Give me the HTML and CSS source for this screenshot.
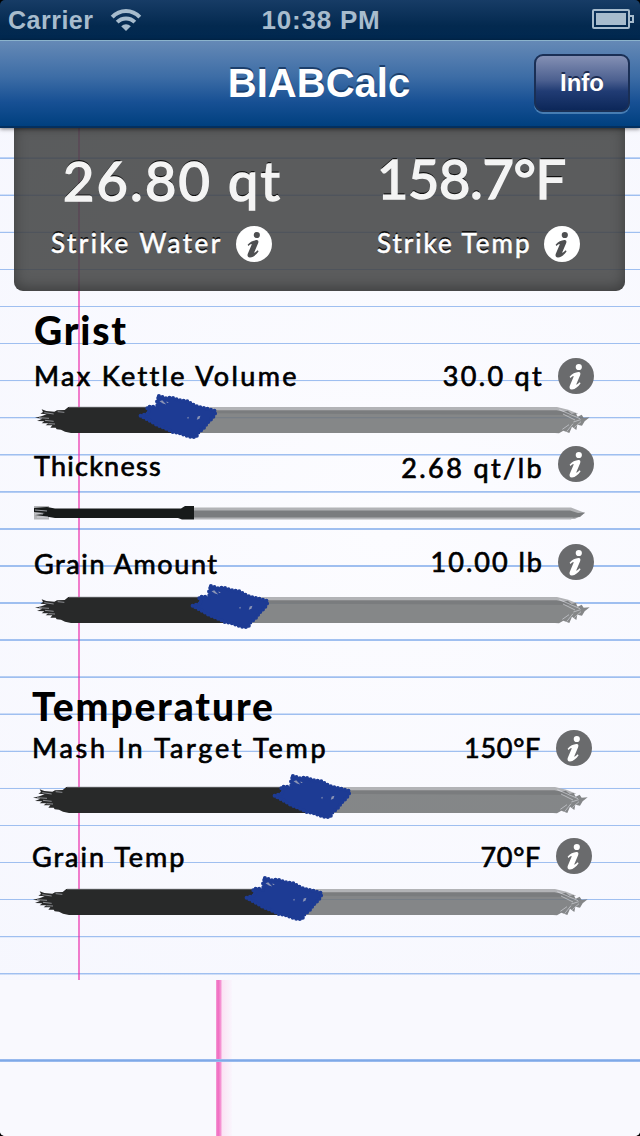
FILE: index.html
```html
<!DOCTYPE html>
<html lang="en">
<head>
    <meta charset="UTF-8">
    <meta name="viewport" content="width=640">
    <title>BIABCalc</title>
    <link rel="stylesheet" href="styles.css">
</head>
<body>
    <!-- shared shapes -->
    <svg class="defs" width="0" height="0" aria-hidden="true">
        <symbol id="info" viewBox="0 0 36 36">
            <circle class="disc" cx="18" cy="18" r="18"/>
            <circle class="mark" cx="20.8" cy="9" r="3.1"/>
            <path class="mark" d="M11.6 18.8C14 15.8 17.4 14.3 20.4 14.1C22.6 14 22.7 15.7 22.1 17.2L18.4 26.1C18 27.3 19.2 26.8 21.7 24.3L22.6 25.3C20.2 28.8 17.2 31.3 14 31.5C11.6 31.6 11.1 29.7 11.8 27.8L15.5 18.9C16 17.6 15 17.9 12.5 19.9Z"/>
        </symbol>
        <symbol id="brush" viewBox="0 15 1710 165">
            <path class="track-edge" d="M300 66H1596L1630 74L1660 86L1640 90L300 84Z"/>
            <path class="track" d="M300 76H1595L1616 80L1628 77L1640 87L1652 84L1658 95L1670 89L1676 98L1694 97L1679 109L1671 122L1657 119L1654 135L1641 125L1633 144L1615 137L1602 145L1590 144H300Z"/>
            <path class="scratch" d="M1603 74L1665 101M1614 87L1650 105M1645 111L1667 104M1625 140L1644 116M1612 133L1632 119M1648 128L1668 110"/>
        </symbol>
        <symbol id="ink" viewBox="0 15 1710 165" preserveAspectRatio="xMinYMin slice">
            <path class="ink" d="M1400 66H130L119 75L96 76L88 80L64 78L50 73L54 81L46 86L65 88L49 94L30 98L52 101L36 108L58 109L50 115L70 115L62 121L82 121L76 128L92 128L95 133L108 134L120 140L138 144H1400Z"/>
            <path class="ink-top" d="M132 67H1400"/>
            <path class="scratch" d="M58 83L86 87M42 98L72 100M60 106L86 109M70 116L90 117M98 80L118 82"/>
        </symbol>
        <symbol id="thumb" viewBox="336 20 250 155">
            <path class="scribble" d="M402 37L424 44L440 42L455 47L470 51L490 53L500 61L520 70L540 74L556 78L572 82L571 92L563 104L550 116L538 133L520 148L515 160L500 161L480 155L462 148L445 146L420 134L395 124L370 109L346 97L374 88L366 72L378 68L398 73L396 55Z"/>
            <path class="thumb-gap" d="M404 53L412 50L424 63L414 60ZM519 99L527 97L524 106L516 109ZM487 102l5 -2-2 7ZM425 53l7 5-6 0Z"/>
        </symbol>
    </svg>

    <header class="status-bar">
        <div class="carrier">
            <span>Carrier</span>
            <svg class="wifi" viewBox="0 0 32 24">
                <path d="M2.2 9.2C10 1 22 1 29.8 9.2" />
                <path d="M7.2 14.2C12 9.3 20 9.3 24.8 14.2" />
                <path class="wifi-dot" d="M11.2 18.2C14 15.5 18 15.5 20.8 18.2L16 23Z" />
            </svg>
        </div>
        <span class="clock">10:38 PM</span>
        <svg class="battery" viewBox="0 0 42 20">
            <rect class="shell" x="1" y="1" width="36" height="18" rx="1"/>
            <rect x="4" y="4" width="30" height="12"/>
            <path class="shell" d="M38 7H41V13H38"/>
        </svg>
    </header>

    <nav class="nav-bar">
        <h1>BIABCalc</h1>
        <button type="button" class="info-button">Info</button>
    </nav>

    <main class="paper">
        <section class="results">
            <div class="result water">
                <div class="big">26.80 qt</div>
                <div class="caption"><span>Strike Water</span><svg class="info"><use href="#info"/></svg></div>
            </div>
            <div class="result temp">
                <div class="big">158.7°F</div>
                <div class="caption"><span>Strike Temp</span><svg class="info"><use href="#info"/></svg></div>
            </div>
        </section>

        <section class="group grist">
            <h2>Grist</h2>
            <div class="row kettle">
                <span class="label">Max Kettle Volume</span>
                <span class="value">30.0 qt</span>
                <svg class="info"><use href="#info"/></svg>
            </div>
            <div class="slider">
                <svg class="base"><use href="#brush"/></svg>
                <div class="fill" style="width: 155px"><svg><use href="#ink"/></svg></div>
                <svg class="thumb" style="left: 112px"><use href="#thumb"/></svg>
            </div>

            <div class="row thickness">
                <span class="label">Thickness</span>
                <span class="value">2.68 qt/lb</span>
                <svg class="info"><use href="#info"/></svg>
            </div>
            <svg class="progress" viewBox="0 0 570 20">
                <path class="track-edge" d="M169 3.5H546L555 7L560 9L550 15H169Z"/>
                <path class="track" d="M169 6.5H545L553 9L560 8.5L555 13L546 14H169Z"/>
                <path class="track-edge" d="M9 2H24V15.5H9ZM169 13.5H548L546 15.5H169Z"/>
                <path class="ink-dark" d="M9 4L22 3L30 4.5H156L160 2H169V15.5H157L153 14H30L18 12L10 11L20 9L9 8Z"/>
                <path class="scratch thin" d="M10 6L22 7M12 13L23 13M10 10L18 10"/>
            </svg>

            <div class="row amount">
                <span class="label">Grain Amount</span>
                <span class="value">10.00 lb</span>
                <svg class="info"><use href="#info"/></svg>
            </div>
            <div class="slider">
                <svg class="base"><use href="#brush"/></svg>
                <div class="fill" style="width: 207px"><svg><use href="#ink"/></svg></div>
                <svg class="thumb" style="left: 164px"><use href="#thumb"/></svg>
            </div>
        </section>

        <section class="group temperature">
            <h2>Temperature</h2>
            <div class="row mash">
                <span class="label">Mash In Target Temp</span>
                <span class="value">150°F</span>
                <svg class="info"><use href="#info"/></svg>
            </div>
            <div class="slider">
                <svg class="base"><use href="#brush"/></svg>
                <div class="fill" style="width: 290px"><svg><use href="#ink"/></svg></div>
                <svg class="thumb" style="left: 248px"><use href="#thumb"/></svg>
            </div>

            <div class="row grain-temp">
                <span class="label">Grain Temp</span>
                <span class="value">70°F</span>
                <svg class="info"><use href="#info"/></svg>
            </div>
            <div class="slider">
                <svg class="base"><use href="#brush"/></svg>
                <div class="fill" style="width: 262px"><svg><use href="#ink"/></svg></div>
                <svg class="thumb" style="left: 220px"><use href="#thumb"/></svg>
            </div>
        </section>
    </main>
</body>
</html>
```
FILE: styles.css
```css
* {
    box-sizing: border-box;
}
html {
    background: #000;
}
body {
    margin: 0;
    width: 640px;
    height: 1136px;
    overflow: hidden;
    border-radius: 5px;
    display: flex;
    flex-direction: column;
    font-family: "Liberation Sans", Arial, sans-serif;
}
svg {
    display: block;
    flex: none;
}
.defs {
    position: absolute;
}

/* status bar */
.status-bar {
    height: 40px;
    padding: 0 6px 0 8px;
    display: grid;
    grid-template-columns: 1fr auto 1fr;
    align-items: center;
    background: linear-gradient(#173c66, #03294f 65%, #002850);
    color: #a7bccd;
    font-size: 25px;
    font-weight: bold;
}
.carrier {
    display: flex;
    align-items: center;
    gap: 16px;
    letter-spacing: 0.5px;
}
.wifi {
    width: 32px;
    height: 24px;
    fill: none;
    stroke: #a7bccd;
    stroke-width: 4;
}
.wifi .wifi-dot {
    fill: #a7bccd;
    stroke: none;
}
.clock {
    font-size: 26px;
    letter-spacing: 0.8px;
}
.battery {
    width: 42px;
    height: 20px;
    justify-self: end;
    margin-top: -2px;
    fill: #a7bccd;
}
.shell {
    fill: none;
    stroke: #a7bccd;
    stroke-width: 2;
}

/* navigation bar */
.nav-bar {
    height: 88px;
    padding: 0 10px;
    display: grid;
    grid-template-columns: 96px 1fr 96px;
    align-items: center;
    background: linear-gradient(#6589b6, #3d6da6 42%, #175094 72%, #00407f);
    border-top: 1px solid #8bb3cc;
    border-bottom: 2px solid #04305f;
    position: relative;
    z-index: 1;
    box-shadow: 0 1px 4px rgba(0, 0, 0, 0.5);
}
h1 {
    grid-column: 2;
    margin: -2px 2px 0 0;
    color: #fff;
    font-size: 40px;
    line-height: 60px;
    text-align: center;
    text-shadow: 0 -2px 0 #1c3f6c;
}
.info-button {
    height: 58px;
    margin-top: -2px;
    border: 2px solid #1a2f55;
    border-radius: 9px;
    background: linear-gradient(#8490b4, #4c6090 45%, #213c74 65%, #0c2759);
    box-shadow: 0 2px 0 rgba(110, 160, 205, 0.6);
    color: #fff;
    font-family: inherit;
    font-size: 24px;
    font-weight: bold;
    text-shadow: 0 -2px 0 #1b2b50;
}

/* ruled sheet, then the bottom strip at a larger scale */
.paper {
    flex: 1;
    font-family: "Chalkboard", "Chalkboard SE", "Comic Sans MS", Lato, sans-serif;
    color: #000;
    background:
        linear-gradient(rgba(235, 40, 170, 0.6), rgba(235, 40, 170, 0.6)) 78px 0 / 2px 852px no-repeat,
        linear-gradient(#a5c2f1, #7fa9e7, #a5c2f1) 0 931px / 640px 3px no-repeat,
        linear-gradient(90deg, #f49fd6, #f069c0 2px, #f69ad5 5px, #fbe3f4 6px, #f9f6fd) 216px 852px / 16px 156px no-repeat,
        linear-gradient(#f9f9fe, #f9f9fe) 0 852px / 640px 156px no-repeat,
        repeating-linear-gradient(transparent 0, transparent 29.3px, #9fbff0 29.6px, #9fbff0 30.8px, transparent 31.1px, transparent 37.07px),
        radial-gradient(circle at 60% 40%, #fcfcff, #f5f6fe);
}

/* result panel */
.results {
    width: 611px;
    height: 163px;
    margin-left: 14px;
    padding-top: 22px;
    display: grid;
    grid-template-columns: 318px 1fr;
    border-radius: 0 0 9px 9px;
    background: rgba(68, 69, 71, 0.88);
    box-shadow: inset 0 -3px 14px rgba(0, 0, 0, 0.35);
    color: #fff;
    text-shadow: 0 -2px 0 #111;
}
.big {
    font-size: 54px;
    line-height: 62px;
    white-space: nowrap;
    color: #f4f4f4;
    -webkit-text-stroke: 1.6px #f4f4f4;
}
.water .big {
    padding-left: 49px;
    letter-spacing: 2.2px;
}
.temp .big {
    padding-left: 45px;
    margin-top: -2px;
    letter-spacing: -0.3px;
}
.caption {
    margin-top: 14px;
    display: flex;
    align-items: center;
    line-height: 36px;
    font-size: 26px;
    white-space: nowrap;
    -webkit-text-stroke: 0.6px #fff;
}
.caption span {
    margin-top: -2px;
}
.water .caption {
    padding-left: 37px;
}
.water .caption span {
    width: 185px;
    letter-spacing: 2.5px;
}
.temp .caption {
    margin-top: 16px;
    padding-left: 45px;
}
.temp .caption span {
    width: 167px;
    letter-spacing: 2px;
}
.info {
    width: 36px;
    height: 36px;
    --disc: #6a6b6d;
    --mark: #fff;
}
.results .info {
    --disc: #fff;
    --mark: #4e4f51;
}
.disc {
    fill: var(--disc);
}
.mark {
    fill: var(--mark);
}

/* settings */
.group {
    padding-left: 34px;
}
.grist {
    padding-top: 14px;
}
.temperature {
    padding-left: 32px;
    padding-top: 46px;
}
h2 {
    margin: 0;
    font-size: 39px;
    font-weight: 900;
    line-height: 51px;
    height: 53px;
    letter-spacing: 1.8px;
}
.row {
    width: 560px;
    height: 36px;
    display: flex;
    align-items: center;
    font-size: 27px;
    line-height: 36px;
    white-space: nowrap;
    -webkit-text-stroke: 0.7px #000;
}
.value {
    margin-left: auto;
    margin-right: 14px;
    letter-spacing: 2px;
}
.kettle .label {
    letter-spacing: 2.35px;
}
.kettle .value {
    letter-spacing: 2.3px;
}
.thickness {
    margin-top: 1px;
}
.thickness .label {
    padding-top: 4px;
    letter-spacing: 1.25px;
}
.thickness .value {
    padding-top: 7px;
    letter-spacing: 2.4px;
}
.amount {
    margin-top: 20px;
}
.amount .label {
    padding-top: 3px;
    letter-spacing: 1.6px;
}
.mash .label {
    letter-spacing: 2.75px;
}
.mash .value,
.grain-temp .value {
    margin-right: 15px;
    letter-spacing: 0.7px;
}
.grain-temp .label,
.grain-temp .value {
    padding-top: 2px;
}
.grain-temp .label {
    letter-spacing: 2px;
}
.temperature h2 {
    height: 49px;
    letter-spacing: 1.9px;
}
.grain-temp {
    margin-top: 13px;
}

/* brush stroke sliders */
.slider {
    position: relative;
    width: 570px;
    height: 55px;
    margin-left: -9px;
}
.kettle + .slider {
    margin-top: -4px;
}
.mash + .slider {
    margin-top: 4px;
}
.grain-temp + .slider {
    margin-top: -2px;
}
.base {
    width: 570px;
    height: 55px;
}
.fill {
    position: absolute;
    left: 0;
    top: 0;
    height: 55px;
    overflow: hidden;
}
.fill svg {
    width: 570px;
    height: 55px;
}
.thumb {
    position: absolute;
    top: 0;
    width: 83px;
    height: 52px;
}
.progress {
    width: 570px;
    height: 20px;
    margin: 22px 0 0 -9px;
}
.track {
    fill: #717375;
    fill-opacity: 0.86;
}
.track-edge {
    fill: #b2b3b6;
}
.ink {
    fill: #282929;
}
.ink-top {
    fill: none;
    stroke: #5c5d5f;
    stroke-width: 3;
}
.ink-dark {
    fill: #171a1a;
}
.scratch {
    fill: none;
    stroke: #e4e5ec;
    stroke-opacity: 0.65;
    stroke-width: 2.5;
}
.thin {
    stroke-width: 1;
}
.scribble {
    fill: #1d3b94;
    stroke: #1d3b94;
    stroke-width: 12;
    stroke-linecap: round;
    stroke-dasharray: 0 11;
}
.thumb-gap {
    fill: #8b94b5;
}
```
